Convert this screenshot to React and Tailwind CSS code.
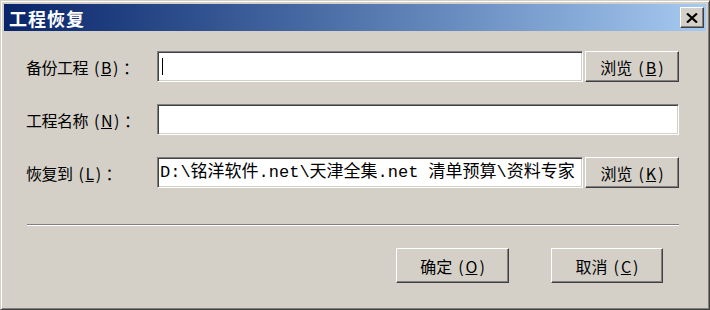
import React from 'react';

const cjk = { fontFamily: '"Noto Sans CJK SC", "Liberation Sans", sans-serif' };
const mono = { fontFamily: '"Liberation Mono", "Noto Sans CJK SC", monospace' };

function Field({ width, children }) {
  return (
    <div
      className={`${width} h-[31px] bg-white border border-t-[#808080] border-l-[#808080] border-b-white border-r-white shadow-[inset_1px_1px_0_#404040,inset_-1px_-1px_0_#d4d0c8] flex items-center overflow-hidden`}
    >
      {children}
    </div>
  );
}

// mnemonic like (B) with the letter underlined
function Mn({ k }) {
  return (
    <>
      <span className="ml-[6px]">(</span>
      <span className="underline mx-[2px]">{k}</span>
      <span>)</span>
    </>
  );
}

function Button({ width, height, children }) {
  return (
    <div
      className={`${width} ${height} bg-[#d4d0c8] border border-t-white border-l-white border-b-[#404040] border-r-[#404040] shadow-[inset_-1px_-1px_0_#808080] flex items-center justify-center text-[16px] text-black`}
      style={cjk}
    >
      {children}
    </div>
  );
}

function Label({ text, mn }) {
  return (
    <div className="w-[131px] text-[16px] text-black whitespace-nowrap tracking-[-0.5px]" style={cjk}>
      {text}
      <Mn k={mn} />
      <span className="ml-[5px]">：</span>
    </div>
  );
}

export default function App() {
  return (
    <div className="w-[710px] h-[310px] bg-[#d4d0c8] border border-t-[#d4d0c8] border-l-[#d4d0c8] border-b-[#404040] border-r-[#404040] shadow-[inset_1px_1px_0_#ffffff,inset_-1px_-1px_0_#808080] p-[3px] flex flex-col">
      {/* title bar */}
      <div className="h-[27px] bg-gradient-to-r from-[#0a246a] to-[#a6caf0] flex items-center justify-between pl-[5px] pr-[2px]">
        <span className="text-white font-bold text-[18px] leading-none tracking-[1px]" style={cjk}>
          工程恢复
        </span>
        <div className="w-[24px] h-[21px] bg-[#d4d0c8] border border-t-white border-l-white border-b-[#404040] border-r-[#404040] shadow-[inset_-1px_-1px_0_#808080] flex items-center justify-center">
          <svg width="12" height="10" viewBox="0 0 12 10">
            <path d="M1 0.5 L11 9.5 M11 0.5 L1 9.5" stroke="#000" strokeWidth="2.2" />
          </svg>
        </div>
      </div>

      <div className="flex flex-col pl-[22px] pr-[27px]">
        <div className="flex items-center mt-[20px]">
          <Label text="备份工程" mn="B" />
          <Field width="w-[426px]">
            <span className="ml-[4px] w-[1px] h-[17px] bg-black" />
          </Field>
          <div className="ml-[2px]">
            <Button width="w-[94px]" height="h-[31px]">
              浏览<Mn k="B" />
            </Button>
          </div>
        </div>

        <div className="flex items-center mt-[22px]">
          <Label text="工程名称" mn="N" />
          <Field width="w-[522px]" />
        </div>

        <div className="flex items-center mt-[22px]">
          <Label text="恢复到" mn="L" />
          <Field width="w-[426px]">
            <span className="ml-[2px] text-[17px] text-black whitespace-nowrap leading-none" style={mono}>
              D:\铭洋软件.net\天津全集.net 清单预算\资料专家
            </span>
          </Field>
          <div className="ml-[2px]">
            <Button width="w-[94px]" height="h-[31px]">
              浏览<Mn k="K" />
            </Button>
          </div>
        </div>

        <div className="mt-[36px] ml-[1px] w-[652px] border-t border-t-[#808080] border-b border-b-white" />

        <div className="flex justify-end gap-[42px] mt-[22px] pr-[16px]">
          <Button width="w-[113px]" height="h-[35px]">
            确定<Mn k="O" />
          </Button>
          <Button width="w-[112px]" height="h-[35px]">
            取消<Mn k="C" />
          </Button>
        </div>
      </div>
    </div>
  );
}
